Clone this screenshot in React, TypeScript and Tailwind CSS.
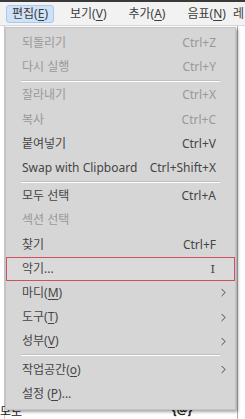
import { ChevronRight } from "lucide-react";

type Item =
  | { sep: true }
  | {
      sep?: false;
      label: React.ReactNode;
      shortcut?: string;
      disabled?: boolean;
      sub?: boolean;
      active?: boolean;
    };

const u = (c: string) => <span className="underline underline-offset-2">{c}</span>;

const items: Item[] = [
  { label: "되돌리기", shortcut: "Ctrl+Z", disabled: true },
  { label: "다시 실행", shortcut: "Ctrl+Y", disabled: true },
  { sep: true },
  { label: "잘라내기", shortcut: "Ctrl+X", disabled: true },
  { label: "복사", shortcut: "Ctrl+C", disabled: true },
  { label: "붙여넣기", shortcut: "Ctrl+V" },
  { label: "Swap with Clipboard", shortcut: "Ctrl+Shift+X" },
  { sep: true },
  { label: "모두 선택", shortcut: "Ctrl+A" },
  { label: "섹션 선택", disabled: true },
  { label: "찾기", shortcut: "Ctrl+F" },
  { label: "악기...", shortcut: "I", active: true },
  { label: <>마디({u("M")})</>, sub: true },
  { label: <>도구({u("T")})</>, sub: true },
  { label: <>성부({u("V")})</>, sub: true },
  { sep: true },
  { label: <>작업공간({u("o")})</>, sub: true },
  { label: <>설정 ({u("P")})...</> },
];

const menus = [
  { label: <>편집({u("E")})</>, open: true },
  { label: <>보기({u("V")})</> },
  { label: <>추가({u("A")})</> },
  { label: <>음표({u("N")})</> },
];

export default function App() {
  return (
    <div
      className="relative w-[245px] h-[419px] overflow-hidden bg-white text-[12px]"
      style={{ fontFamily: '"Noto Sans", "Noto Sans CJK KR", sans-serif' }}
    >
      <div className="h-[2px] bg-[#3a3a3a]" />
      <div className="flex h-[24px] items-center gap-[10px] whitespace-nowrap bg-[#f2f2f2] pl-[6px] text-[#3c3c3c] border-b border-[#d8d8d8]">
        {menus.map((m, i) => (
          <div
            key={i}
            className={
              m.open
                ? "rounded-[3px] border border-[#a8c8ec] bg-[#cfe2f7] px-[5px] leading-[16px]"
                : "border border-transparent px-[5px] leading-[16px]"
            }
          >
            {m.label}
          </div>
        ))}
        <div className="-ml-[9px] leading-[16px]">레</div>
      </div>

      {/* page behind the menu */}
      <div className="flex h-[393px]">
        <div className="w-[5px] border-r border-[#c8c8c8] bg-white" />
        <div className="flex-1" />
        <div className="w-[8px] border-l border-[#b0b0b0] bg-white" />
      </div>
      <div className="absolute bottom-0 left-0 text-[12px] leading-[14px] text-[#222]">모로</div>
      <div className="absolute bottom-[2px] left-[172px] text-[12px] leading-[14px] font-bold text-[#222]">{"{@}"}</div>

      <div className="absolute left-[5px] top-[27px] w-[231px] bg-[#d6d6d6] pt-[3px] pb-[3px] shadow-[2px_2px_3px_rgba(0,0,0,0.35)] border border-[#c4c4c4]">
        {items.map((it, i) =>
          it.sep ? (
            <div key={i} className="mx-[15px] my-[1px] h-[2px] border-t border-[#c0c0c0] border-b-[1px] border-b-white" />
          ) : (
            <div
              key={i}
              className={
                "flex h-[24.2px] items-center whitespace-nowrap pl-[15px] pr-[18px] " +
                (it.disabled ? "text-[#999] " : "text-[#454545] ") +
                (it.active ? "border border-[#d0505e] bg-[#dadada]" : "border border-transparent")
              }
            >
              <span className="flex-1">{it.label}</span>
              {it.shortcut && (
                <span className={it.shortcut === "I" ? "pr-[1px] font-serif text-[13px]" : ""}>{it.shortcut}</span>
              )}
              {it.sub && <ChevronRight className="mr-[-14px] size-[13px]" strokeWidth={1.8} />}
            </div>
          )
        )}
      </div>
    </div>
  );
}
